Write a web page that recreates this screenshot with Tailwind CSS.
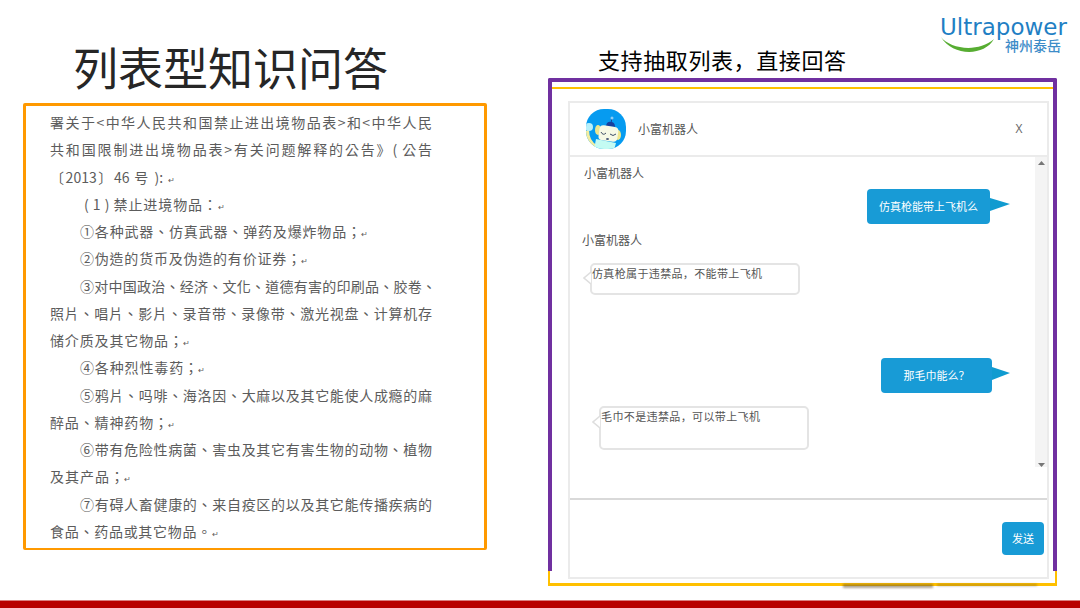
<!DOCTYPE html>
<html lang="zh-CN">
<head>
  <meta charset="UTF-8" />
  <meta name="viewport" content="width=device-width, initial-scale=1.0" />
  <title>列表型知识问答</title>
  <script src="https://cdn.jsdelivr.net/npm/@tailwindcss/browser@4"></script>
</head>
<body class="bg-white min-h-screen flex flex-col font-['Noto_Sans_CJK_SC',sans-serif]">

  <main class="grid grid-cols-[464fr_509fr] gap-[61px] px-[23px]">

    <!-- Source document -->
    <section>
      <h1 class="h-[103px] pt-[34px] pl-[50px] text-[45px] leading-[66px] font-normal text-[#262626]">列表型知识问答</h1>

      <article lang="zh-TW" class="flex flex-col justify-between h-[447px] border-[3px] border-b-2 border-[#ff9900] rounded-xs pl-6 pr-[52px] pt-[3px] pb-1 text-[14px] leading-[26px] font-normal text-[#5c5c5c] whitespace-nowrap font-['Noto_Sans_CJK_TC',sans-serif]">
        <p class="[text-align-last:justify]">署关于&lt;中华人民共和国禁止进出境物品表&gt;和&lt;中华人民</p>
        <p class="[text-align-last:justify]">共和国限制进出境物品表&gt;有关问题解释的公告》( 公告</p>
        <p class="w-[125px] [text-align-last:justify]">〔2013〕46 号 ): <span class="text-[8px] leading-none">↵</span></p>
        <p class="ml-[34px] w-[141px] [text-align-last:justify]">( 1 ) 禁止进境物品：<span class="text-[8px] leading-none">↵</span></p>
        <p class="ml-[30px] w-[288px] [text-align-last:justify]">①各种武器、仿真武器、弹药及爆炸物品；<span class="text-[8px] leading-none">↵</span></p>
        <p class="ml-[30px] w-[228px] [text-align-last:justify]">②伪造的货币及伪造的有价证券；<span class="text-[8px] leading-none">↵</span></p>
        <p class="ml-[30px] -mr-1 [text-align-last:justify]">③对中国政治、经济、文化、道德有害的印刷品、胶卷、</p>
        <p class="[text-align-last:justify]">照片、唱片、影片、录音带、录像带、激光视盘、计算机存</p>
        <p class="w-[140px] [text-align-last:justify]">储介质及其它物品；<span class="text-[8px] leading-none">↵</span></p>
        <p class="ml-[30px] w-[125px] [text-align-last:justify]">④各种烈性毒药；<span class="text-[8px] leading-none">↵</span></p>
        <p class="ml-[30px] [text-align-last:justify]">⑤鸦片、吗啡、海洛因、大麻以及其它能使人成瘾的麻</p>
        <p class="w-[125px] [text-align-last:justify]">醉品、精神药物；<span class="text-[8px] leading-none">↵</span></p>
        <p class="ml-[30px] [text-align-last:justify]">⑥带有危险性病菌、害虫及其它有害生物的动物、植物</p>
        <p class="w-[81px] [text-align-last:justify]">及其产品；<span class="text-[8px] leading-none">↵</span></p>
        <p class="ml-[30px] [text-align-last:justify]">⑦有碍人畜健康的、来自疫区的以及其它能传播疾病的</p>
        <p class="w-[169px] [text-align-last:justify]">食品、药品或其它物品。<span class="text-[8px] leading-none">↵</span></p>
      </article>
    </section>

    <!-- Chat demo -->
    <section>
      <header class="flex justify-between h-[78px] pl-[50px] -mr-3">
        <h2 class="w-[248px] pt-[42px] text-[22px] leading-[34px] text-black whitespace-nowrap [text-align-last:justify]">支持抽取列表，直接回答</h2>
        <div class="relative w-[129px] pt-[13px] text-[#1f7fc4]">
          <div class="text-[23px] leading-[28px] font-['DejaVu_Sans',sans-serif]">Ultrapower</div>
          <svg class="absolute left-0 top-[36px] w-[56px] h-[18px]" viewBox="0 0 56 18" fill="#57ad32">
            <path d="M1 1C10 13 38 17 54 3C44 21 12 20 1 1Z" />
          </svg>
          <div class="-mt-[6px] pl-[65px] text-[14px] leading-[20px] font-medium text-[#3d8cc8]">神州泰岳</div>
        </div>
      </header>

      <div class="relative pt-[23px] pb-[7px] pl-5 pr-2">
        <div class="absolute inset-x-0 top-[9px] bottom-0 border-2 border-b-[3px] border-[#ffc000]"></div>
        <div class="absolute inset-x-0 top-0 bottom-[15px] border-4 border-b-0 border-[#7030a0] rounded-t-xs"></div>
        <div class="absolute right-[124px] -bottom-[2px] w-[90px] h-1 bg-[#5b4a2a]/50 blur-[1px]"></div>
        <div class="absolute right-5 bottom-0 w-[100px] h-[2px] bg-[#5b4a2a]/40 blur-[1px]"></div>

        <div class="relative flex flex-col h-[478px] border-2 border-[#ebebeb] bg-white text-[#555] text-[12px]">
          <div class="flex items-center h-[54px] pl-4 pr-[22px] border-b-2 border-[#ebebeb]">
            <svg class="w-10 h-10" viewBox="0 0 40 40">
              <defs><clipPath id="face"><rect width="40" height="40" rx="18" /></clipPath></defs>
              <g clip-path="url(#face)">
                <rect width="40" height="40" fill="#069bf0" />
                <path d="M3 20Q3 32 11 36L9 41L0 36L0 22Z" fill="#f3eda0" />
                <circle cx="3" cy="18" r="4" fill="#b8f0fa" />
                <path d="M10 30L30 34L28 41H8Z" fill="#c4fbf3" />
                <ellipse cx="12" cy="21" rx="3" ry="5" fill="#eee68e" />
                <ellipse cx="32" cy="26" rx="3" ry="5" fill="#eee68e" />
                <path d="M20 17Q21 12 25 13Q29 13 29 18Z" fill="#173f9d" />
                <path d="M25 14L26 9" stroke="#173f9d" stroke-width="1" />
                <circle cx="26" cy="9" r="1.5" fill="#8fcdf2" />
                <rect x="13" y="17" width="19" height="15" rx="4" fill="#f6f9e6" transform="rotate(8 22 24)" />
                <path d="M15 23Q17 27 20 24M24 25Q27 28 30 25" fill="none" stroke="#3d4c66" stroke-width="1" />
                <ellipse cx="21.500" cy="30" rx="1.500" ry="1" fill="#4a5878" />
              </g>
            </svg>
            <h3 class="ml-3">小富机器人</h3>
            <button class="ml-auto w-3 text-[12px] leading-5 text-[#666] font-['Open_Sans',sans-serif]" aria-label="关闭">X</button>
          </div>

          <div class="flex h-[310px]">
            <div class="flex-1 flex flex-col items-start pt-[7px] leading-[18px]">
              <p class="ml-[14px]">小富机器人</p>
              <div class="relative self-end mr-[45px] mt-[7px] w-[123px] h-[35px] rounded-[4px] bg-[#189bd6] text-white text-[11px] leading-[34px] text-center">
                仿真枪能带上飞机么
                <svg class="absolute left-full top-[9px] w-5 h-[13px]" viewBox="0 0 20 13" fill="#109bd0"><path d="M0 0L20 6L0 13Z" /></svg>
              </div>
              <p class="ml-3 mt-[7px]">小富机器人</p>
              <div class="relative ml-5 mt-[14px] w-[210px] h-8 border-2 border-[#e4e4e4] rounded-[5px] text-[11px] leading-4 whitespace-nowrap">
                <p class="w-[170px] [text-align-last:justify]">仿真枪属于违禁品，不能带上飞机</p>
                <svg class="absolute -left-[9px] top-[6px] w-2 h-[14px]" viewBox="0 0 8 14" fill="white" stroke="#dedede" stroke-width="1.500"><path d="M8 1L1 7L8 13" /></svg>
              </div>
              <div class="relative self-end mr-[43px] mt-[63px] w-[111px] h-[35px] rounded-[4px] bg-[#189bd6] text-white text-[11px] leading-[34px] text-center">
                那毛巾能么？
                <svg class="absolute left-full top-[9px] w-[18px] h-[13px]" viewBox="0 0 18 13" fill="#109bd0"><path d="M0 0L18 6L0 13Z" /></svg>
              </div>
              <div class="relative ml-[29px] mt-[13px] w-[210px] h-11 border-2 border-[#e4e4e4] rounded-[5px] text-[11px] leading-4 whitespace-nowrap">
                <p class="w-[159px] [text-align-last:justify]">毛巾不是违禁品，可以带上飞机</p>
                <svg class="absolute -left-[9px] top-[7px] w-2 h-[14px]" viewBox="0 0 8 14" fill="white" stroke="#dedede" stroke-width="1.500"><path d="M8 1L1 7L8 13" /></svg>
              </div>
            </div>
            <div class="flex flex-col justify-between items-center w-3 pt-1 bg-[#f4f4f4]">
              <svg class="w-[7px] h-1" viewBox="0 0 7 4" fill="#777"><path d="M0 4L3.500 0L7 4Z" /></svg>
              <svg class="w-[7px] h-1" viewBox="0 0 7 4" fill="#777"><path d="M0 0L3.500 4L7 0Z" /></svg>
            </div>
          </div>

          <form class="flex flex-1 items-center mt-[31px] pr-[3px] border-t-2 border-[#d9d9d9]">
            <textarea class="flex-1 self-stretch resize-none outline-none" aria-label="输入问题"></textarea>
            <button type="button" class="w-[42px] h-[33px] rounded-[4px] bg-[#189bd6] text-white text-[11px]">发送</button>
          </form>
        </div>
      </div>
    </section>
  </main>

  <footer class="mt-auto h-2 border-t border-[#d98080] bg-[#b80000]"></footer>
</body>
</html>
